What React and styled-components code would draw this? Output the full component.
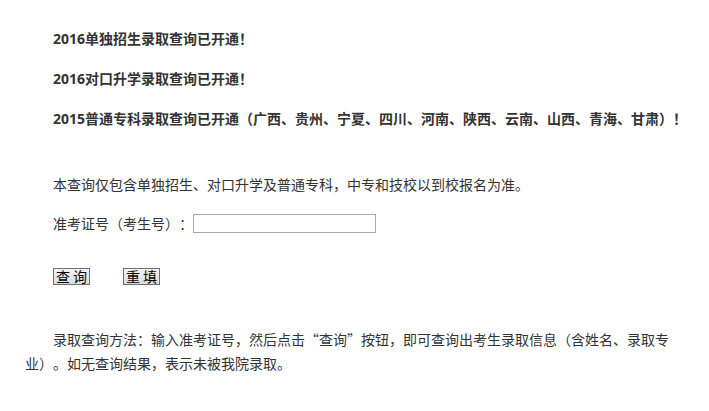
import React from "react";
import styled, { createGlobalStyle } from "styled-components";

const GlobalStyle = createGlobalStyle`
  body {
    margin: 0;
    background: #fff;
    color: #333;
    font-family: "Noto Sans CJK SC", "Liberation Sans", sans-serif;
    font-size: 14px;
    text-spacing-trim: space-all;
  }
`;

const Page = styled.div`
  padding: 26px 0 40px 25px;
`;

const Headlines = styled.div`
  display: flex;
  flex-direction: column;
  gap: 16px;
`;

const Headline = styled.p`
  margin: 0;
  line-height: 24px;
  font-weight: 700;
  text-indent: 28px;
  white-space: nowrap;
`;

const Year = styled.span`
  font-family: "Noto Sans", sans-serif;
  line-height: 1;
`;

const Note = styled.p`
  margin: 42px 0 0;
  line-height: 24px;
  text-indent: 28px;
`;

const Field = styled.label`
  display: flex;
  align-items: center;
  height: 24px;
  margin-top: 15px;
  padding-left: 28px;
  line-height: 24px;
`;

const Input = styled.input`
  box-sizing: border-box;
  width: 183px;
  height: 19px;
  margin: 0;
  padding: 1px 3px;
  border: 1px solid #a9a9a9;
  background: #fff;
  font: inherit;
  font-size: 13px;
  &:focus {
    outline: none;
  }
`;

const Actions = styled.div`
  display: flex;
  gap: 33px;
  margin-top: 33px;
  padding-left: 28px;
`;

const Button = styled.button`
  box-sizing: border-box;
  width: 37px;
  height: 17px;
  margin: 0;
  padding: 0;
  border: 1px solid #707070;
  background: linear-gradient(#f3f3f3, #dcdcdc);
  color: #000;
  font-family: inherit;
  font-size: 14px;
  line-height: 15px;
  white-space: pre;
  cursor: pointer;
`;

const Method = styled.p`
  width: 644px;
  margin: 42px 0 0;
  line-height: 24px;
  text-indent: 28px;
  text-align: justify;
`;

export default function App() {
  return (
    <>
      <GlobalStyle />
      <Page>
        <Headlines>
          <Headline><Year>2016</Year>单独招生录取查询已开通！</Headline>
          <Headline><Year>2016</Year>对口升学录取查询已开通！</Headline>
          <Headline>
            <Year>2015</Year>普通专科录取查询已开通（广西、贵州、宁夏、四川、河南、陕西、云南、山西、青海、甘肃）！
          </Headline>
        </Headlines>
        <Note>本查询仅包含单独招生、对口升学及普通专科，中专和技校以到校报名为准。</Note>
        <Field>
          准考证号（考生号）：
          <Input type="text" />
        </Field>
        <Actions>
          <Button type="button">查 询</Button>
          <Button type="reset">重 填</Button>
        </Actions>
        <Method>
          录取查询方法：输入准考证号，然后点击“查询”按钮，即可查询出考生录取信息（含姓名、录取专业）。如无查询结果，表示未被我院录取。
        </Method>
      </Page>
    </>
  );
}
